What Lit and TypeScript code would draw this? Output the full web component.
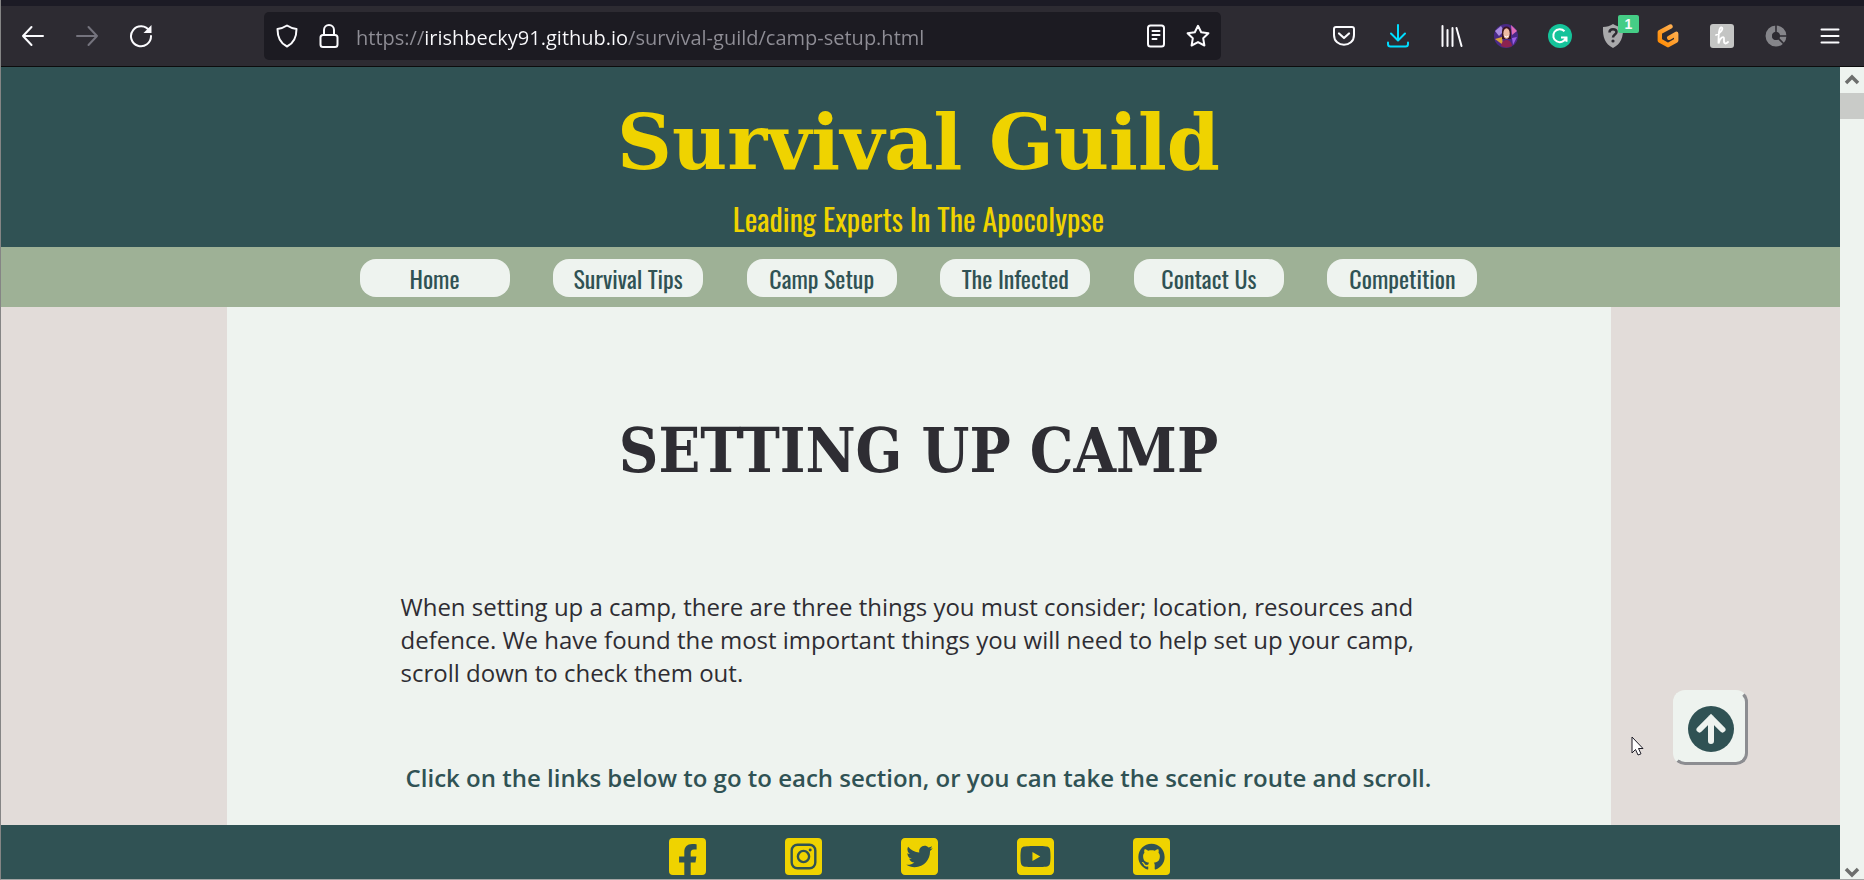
import { LitElement, html, css, svg } from "lit";
import { customElement, state } from "lit/decorators.js";

const URL_TEXT = "https://irishbecky91.github.io/survival-guild/camp-setup.html";

const icon = (body: unknown, size = 24, box = "0 0 24 24") =>
  html`<svg class="icon" width=${size} height=${size} viewBox=${box} aria-hidden="true">${body}</svg>`;

const line = (d: string, width = 2) =>
  svg`<path d=${d} fill="none" stroke="currentColor" stroke-width=${width} stroke-linecap="round" stroke-linejoin="round" />`;

@customElement("browser-toolbar")
class BrowserToolbar extends LitElement {
  static styles = css`
    :host { display: block; color: #fbfbfe; font-family: "Open Sans", "Noto Sans", sans-serif; }
    .tabs { height: 6px; background: #1c1b25; }
    .bar {
      display: grid;
      grid-template-columns: 263px minmax(300px, 957px) minmax(480px, 1fr);
      height: 60px;
      align-items: center;
      background: #2d2b32;
      border-bottom: 1px solid #0c0c0d;
    }
    .group { display: flex; align-items: center; }
    .nav { padding-left: 14px; gap: 18px; }
    .actions { justify-content: flex-end; gap: 18px; padding-right: 16px; }
    button {
      display: grid; place-items: center; width: 36px; height: 36px; padding: 0;
      border: 0; background: none; color: inherit; position: relative;
    }
    .dim { color: #74737d; }
    .blue { color: #00ddff; }
    .icon { display: block; }
    .address {
      display: flex; align-items: center; height: 48px; padding: 0 5px;
      border-radius: 5px; background: #1c1b22; gap: 6px;
    }
    .field {
      flex: 1; min-width: 0; height: 42px; padding: 2px 0 0 3px; border: 0; outline: 0; box-sizing: border-box;
      font: 20px/40px "Segoe UI", "Open Sans", "Noto Sans", sans-serif;
      color: transparent;
      background: linear-gradient(90deg, #8f8e96 0 71px, #fbfbfe 71px 274px, #8f8e96 274px);
      -webkit-background-clip: text;
      background-clip: text;
    }
    .badge {
      position: absolute; left: 22px; top: -3px; width: 21px; height: 18px;
      border-radius: 2px; background: #45cd86; font-size: 14px; line-height: 18px;
      font-weight: 700; text-align: center;
    }
  `;

  render() {
    return html`
      <div class="tabs"></div>
      <div class="bar">
        <div class="group nav">
          <button aria-label="Back">${icon(line("M22 12H2M10.500 3 2 12l8.500 9"))}</button>
          <button class="dim" aria-label="Forward">${icon(line("M2 12h20M13.500 3 22 12l-8.500 9"))}</button>
          <button aria-label="Reload">
            ${icon(svg`${line("M20.500 7A10 10 0 1 0 22 12")}<path d="M22.500 1v8h-8z" fill="currentColor" />`)}
          </button>
        </div>
        <div class="address">
          <button aria-label="Tracking protection">
            ${icon(line("M12 1.500C9 3.500 6 4.500 2.500 5c0 8 2 14 9.500 17.500C19.500 19 21.500 13 21.500 5 18 4.500 15 3.500 12 1.500z"))}
          </button>
          <button aria-label="Site security">
            ${icon(svg`<rect x="3.500" y="11" width="17" height="12" rx="2.500" fill="none" stroke="currentColor" stroke-width="2" />${line("M7 11V6a5 5 0 0 1 10 0v5")}`)}
          </button>
          <input class="field" type="text" aria-label="Address" spellcheck="false" .value=${URL_TEXT} />
          <button aria-label="Reader view">
            ${icon(svg`<rect x="4" y="1.500" width="16" height="21" rx="2.500" fill="none" stroke="currentColor" stroke-width="2" />${line("M8.500 7h7M8.500 11h7M8.500 15h4")}`)}
          </button>
          <button aria-label="Bookmark">
            ${icon(line("M12 1.800l3.200 6.500 7.200 1-5.200 5 1.200 7.200L12 18.100l-6.400 3.400 1.200-7.200-5.200-5 7.200-1z"))}
          </button>
        </div>
        <div class="group actions">
          <button aria-label="Save to Pocket">
            ${icon(svg`${line("M4 3h16a2 2 0 0 1 2 2v6c0 13-20 13-20 0V5a2 2 0 0 1 2-2z")}${line("M7 9.500l5 4.500 5-4.500", 2.2)}`)}
          </button>
          <button class="blue" aria-label="Downloads">
            ${icon(line("M12 1v15M5 9.500l7 7 7-7M2 18.500V20a2.500 2.500 0 0 0 2.500 2.500h15A2.500 2.500 0 0 0 22 20v-1.500"))}
          </button>
          <button aria-label="Library">${icon(line("M2.500 2v20M7.500 6v16M12.500 4v18M16.500 4l5 18"))}</button>
          <button aria-label="Profile">
            ${icon(svg`
              <circle cx="12" cy="12" r="12" fill="#4a2a86" />
              <path d="M1 7l6-5 3 5-5 5z" fill="#a98be0" /><path d="M1 15l7-2 1 8z" fill="#d9a23a" />
              <path d="M17 1l6 6-5 4z" fill="#e06bb8" /><path d="M18 14l5-1-4 8z" fill="#9a5be6" />
              <path d="M8 7c0-6 9-6 9 0v8H8z" fill="#3b1520" />
              <ellipse cx="12.500" cy="9.500" rx="3.200" ry="5.200" fill="#eebba4" />
              <path d="M10.500 12q2 2 4 0" stroke="#fff" fill="none" />
              <path d="M7 22c1-8 10-8 11 0a12 12 0 0 1-11 0z" fill="#8c2350" />`)}
          </button>
          <button aria-label="Grammarly">
            ${icon(svg`<circle cx="12" cy="12" r="12" fill="#15c39a" />
              <path d="M16.500 7.200A6.500 6.500 0 1 0 18 13.500h-5M18.500 12.800v5" fill="none" stroke="#fff" stroke-width="2" />`)}
          </button>
          <button aria-label="Site rating">
            ${icon(svg`<path d="M11 0c3 2 6 3 10 3 .5 10-2 17-10 21C3 20 .5 13 1 3c4 0 7-1 10-3z" fill="#a9a9ab" />
              <path d="M7.500 8.500c0-4.500 7-4 7-.5 0 2.500-3.500 2.500-3.500 5.500" fill="none" stroke="#2d2b32" stroke-width="2.500" />
              <circle cx="11" cy="17" r="1.600" fill="#2d2b32" />`)}
            <span class="badge">1</span>
          </button>
          <button aria-label="Gitpod">
            ${icon(svg`<defs><linearGradient id="gp" x1="1" y1="0" x2="0" y2="1"><stop stop-color="#ffb45b" /><stop offset="1" stop-color="#ff8a00" /></linearGradient></defs>
              <path d="M14.500 2.500 3.800 8.200v8.300l8.200 4.700 8.200-4.700V9.800l-7 4" fill="none" stroke="url(#gp)" stroke-width="4.400" stroke-linecap="round" stroke-linejoin="round" />`)}
          </button>
          <button aria-label="Honey">
            ${icon(svg`<rect width="24" height="24" rx="3" fill="#c4c5c4" />
              <path d="M6 11c5-2 8-7 5.500-7.500S8.500 10 8.500 19.500c1-6 6-8.500 5.500-4.500-.5 5 1.500 5.500 4 3" fill="none" stroke="#fff" stroke-width="1.800" stroke-linecap="round" />`)}
          </button>
          <button aria-label="Tracker">
            ${icon(svg`<circle cx="12" cy="12" r="7.200" fill="none" stroke="#85858a" stroke-width="6.500" />
              <path d="M12 12V0M12 12h12M12 12l9 9" stroke="#2d2b32" stroke-width="1.600" /><circle cx="12" cy="12" r="3.800" fill="#2d2b32" />`)}
          </button>
          <button aria-label="Menu">${icon(line("M3.500 5.500h17M3.500 12h17M3.500 18.500h17"))}</button>
        </div>
      </div>
    `;
  }
}

const SOCIAL = [
  {
    name: "Facebook",
    art: svg`<path d="M400 32H48A48 48 0 0 0 0 80v352a48 48 0 0 0 48 48h137.250V327.690h-63V256h63v-54.640c0-62.150 37-96.480 93.670-96.480 27.140 0 55.520 4.840 55.520 4.840v61h-31.270c-30.810 0-40.420 19.120-40.420 38.730V256h68.780l-11 71.690h-57.780V480H400a48 48 0 0 0 48-48V80a48 48 0 0 0-48-48z" />`,
  },
  {
    name: "Instagram",
    art: svg`<rect y="32" width="448" height="448" rx="48" />
      <g fill="none" stroke="#305254" stroke-width="29"><rect x="81" y="113" width="286" height="286" rx="70" /><circle cx="224" cy="256" r="68" /></g>
      <circle cx="305" cy="176" r="18" fill="#305254" />`,
  },
  {
    name: "Twitter",
    art: svg`<path d="M400 32H48C21.500 32 0 53.500 0 80v352c0 26.500 21.500 48 48 48h352c26.500 0 48-21.500 48-48V80c0-26.500-21.500-48-48-48zm-48.900 158.800c.2 2.800.2 5.700.2 8.500 0 86.700-66 186.600-186.600 186.600-37.200 0-71.700-10.800-100.700-29.400 5.300.6 10.400.8 15.800.8 30.700 0 58.900-10.400 81.400-28-28.800-.6-53-19.500-61.300-45.500 10.100 1.500 19.200 1.500 29.600-1.200-30-6.100-52.500-32.500-52.500-64.400v-.8c8.700 4.900 18.900 7.900 29.600 8.300a65.447 65.447 0 0 1-29.200-54.600c0-12.200 3.200-23.400 8.900-33.100 32.300 39.800 80.800 65.800 135.200 68.600-9.300-44.500 24-80.600 64-80.600 18.900 0 35.900 7.900 47.900 20.700 14.800-2.800 29-8.300 41.600-15.800-4.900 15.200-15.200 28-28.800 36.100 13.200-1.400 26-5.100 37.800-10.200-8.900 13.100-20.100 24.700-32.900 34z" />`,
  },
  {
    name: "YouTube",
    art: svg`<path d="M186.800 202.100l95.200 54.100-95.200 54.100V202.100zM448 80v352c0 26.500-21.500 48-48 48H48c-26.500 0-48-21.500-48-48V80c0-26.500 21.500-48 48-48h352c26.500 0 48 21.500 48 48zm-42 176.300s0-59.600-7.600-88.200c-4.200-15.800-16.500-28.200-32.200-32.400C337.900 128 224 128 224 128s-113.900 0-142.200 7.700c-15.700 4.200-28 16.600-32.200 32.400-7.600 28.500-7.600 88.200-7.600 88.200s0 59.600 7.600 88.200c4.200 15.800 16.500 27.700 32.200 31.900C110.100 384 224 384 224 384s113.900 0 142.200-7.700c15.700-4.200 28-16.100 32.200-31.900 7.600-28.500 7.600-88.100 7.600-88.100z" />`,
  },
  {
    name: "GitHub",
    art: svg`<rect y="32" width="448" height="448" rx="48" />
      <path transform="translate(65 99) scale(13.250)" fill="#305254" d="M12 .297c-6.630 0-12 5.373-12 12 0 5.303 3.438 9.800 8.205 11.385.6.113.82-.258.82-.577 0-.285-.01-1.040-.015-2.040-3.338.724-4.042-1.610-4.042-1.610C4.422 18.070 3.633 17.700 3.633 17.700c-1.087-.744.084-.729.084-.729 1.205.084 1.838 1.236 1.838 1.236 1.070 1.835 2.809 1.305 3.495.998.108-.776.417-1.305.760-1.605-2.665-.3-5.466-1.332-5.466-5.930 0-1.310.465-2.380 1.235-3.220-.135-.303-.54-1.523.105-3.176 0 0 1.005-.322 3.300 1.230.96-.267 1.980-.399 3-.405 1.020.006 2.040.138 3 .405 2.280-1.552 3.285-1.230 3.285-1.230.645 1.653.24 2.873.12 3.176.765.840 1.230 1.910 1.230 3.220 0 4.610-2.805 5.625-5.475 5.920.420.360.810 1.096.810 2.220 0 1.606-.015 2.896-.015 3.286 0 .315.210.690.825.570C20.565 22.092 24 17.592 24 12.297c0-6.627-5.373-12-12-12" />`,
  },
];

const PAGES = ["Home", "Survival Tips", "Camp Setup", "The Infected", "Contact Us", "Competition"];

@customElement("guild-page")
class GuildPage extends LitElement {
  static styles = css`
    :host {
      display: grid; grid-template-rows: auto auto minmax(0, 1fr) auto; min-height: 0;
      background: #e2dcd9; color: #2e2d33; font: 24px/33px "Open Sans", "Noto Sans", sans-serif;
    }
    h1, h2, p { margin: 0; }
    .masthead { padding: 24px 4px 4px 0; background: #305254; color: #efd300; text-align: center; }
    .brand { font: 700 76px/104px "Special Elite", "DejaVu Serif", serif; }
    .tagline { font: 30px/48px "Oswald", "Liberation Sans Narrow", Roboto, sans-serif; }
    .menu { padding: 12px 4px 10px 0; background: #9eb196; }
    .links { display: flex; justify-content: space-between; width: 61%; max-width: 1118px; margin: 0 auto; }
    .link {
      width: 150px; border-radius: 16px; background: #eef3ef; color: #305254; text-align: center; text-decoration: none;
      font: 24px/38px "Oswald", "Liberation Sans Narrow", Roboto, sans-serif;
    }
    .body { display: flex; justify-content: center; min-height: 0; padding-right: 4px; overflow: hidden; }
    .sheet { width: 1384px; max-width: 76%; padding: 96px 0 0; background: #eef3ef; box-sizing: border-box; }
    .title {
      font: 700 61px/96px "Special Elite", "DejaVu Serif Condensed", "DejaVu Serif", serif;
      text-align: center; text-transform: uppercase;
    }
    .intro { width: 1036px; max-width: 90%; margin: 91px auto 0; }
    .hint { margin-top: 72px; color: #305254; font-weight: 600; text-align: center; }
    .social { display: flex; justify-content: center; gap: 79px; padding: 13px 3px 4px 0; background: #305254; }
    .social a { display: block; color: #efd300; }
    .social svg { display: block; fill: currentColor; }
    .top {
      position: absolute; right: 116px; bottom: 114px; width: 75px; height: 75px; padding: 0;
      display: grid; place-items: center; border: 3px solid #eef3ef; border-right-color: #8c8d91;
      border-bottom-color: #8c8d91; border-radius: 12px; background: #eef3ef;
    }
    .cursor { position: absolute; right: 220px; bottom: 123px; }
  `;

  render() {
    return html`
      <header class="masthead">
        <h1 class="brand">Survival Guild</h1>
        <p class="tagline">Leading Experts In The Apocolypse</p>
      </header>
      <nav class="menu">
        <div class="links">${PAGES.map((p) => html`<a class="link" href="#">${p}</a>`)}</div>
      </nav>
      <main class="body">
        <article class="sheet">
          <h2 class="title">Setting Up Camp</h2>
          <p class="intro">
            When setting up a camp, there are three things you must consider; location, resources and defence. We have
            found the most important things you will need to help set up your camp, scroll down to check them out.
          </p>
          <p class="hint">Click on the links below to go to each section, or you can take the scenic route and scroll.</p>
        </article>
      </main>
      <footer class="social">
        ${SOCIAL.map(
          (s) => html`<a href="#" aria-label=${s.name}><svg width="37" height="37" viewBox="0 32 448 448">${s.art}</svg></a>`
        )}
      </footer>
      <button class="top" aria-label="Back to top">
        <svg width="48" height="48" viewBox="0 0 48 48">
          <circle cx="24" cy="25" r="23" fill="#305254" />
          <path d="M24 37V14M12.500 25.500 24 14l11.500 11.500" fill="none" stroke="#eef3ef" stroke-width="6" stroke-linecap="round" />
        </svg>
      </button>
      <svg class="cursor" width="13" height="20" viewBox="0 0 13 20" aria-hidden="true">
        <path d="M1 1v16l3.500-3.500L7 19l3-1.200-2.500-5.300H12z" fill="#fff" stroke="#1c1b25" />
      </svg>
    `;
  }
}

@customElement("app-root")
class AppRoot extends LitElement {
  static styles = css`
    :host {
      display: grid; grid-template-rows: auto minmax(0, 1fr); height: 100vh; box-sizing: border-box;
      border-left: 1px solid #858585; border-bottom: 1px solid #a5a5a5; overflow: hidden;
    }
    .view { display: grid; grid-template-columns: minmax(0, 1fr) 24px; min-height: 0; position: relative; }
    .scroll { display: flex; flex-direction: column; background: #eef3ef; }
    .arrow { height: 26px; padding: 0; border: 0; background: none; display: grid; place-items: center; }
    .down { height: 14px; }
    .track { flex: 1; }
    .thumb { height: 26px; background: #c9cbc8; }
  `;

  @state() private scroller = ["M2 9l6-6 6 6", "M2 3l6 6 6-6"];

  private arrow(label: string, d: string, extra = "") {
    return html`<button class="arrow ${extra}" aria-label=${label}>
      <svg width="16" height="12" viewBox="0 0 16 12"><path d=${d} fill="none" stroke="#6d6e6d" stroke-width="3.500" /></svg>
    </button>`;
  }

  render() {
    return html`
      <browser-toolbar></browser-toolbar>
      <div class="view">
        <guild-page></guild-page>
        <div class="scroll">
          ${this.arrow("Scroll up", this.scroller[0])}
          <div class="track"><div class="thumb"></div></div>
          ${this.arrow("Scroll down", this.scroller[1], "down")}
        </div>
      </div>
    `;
  }
}
